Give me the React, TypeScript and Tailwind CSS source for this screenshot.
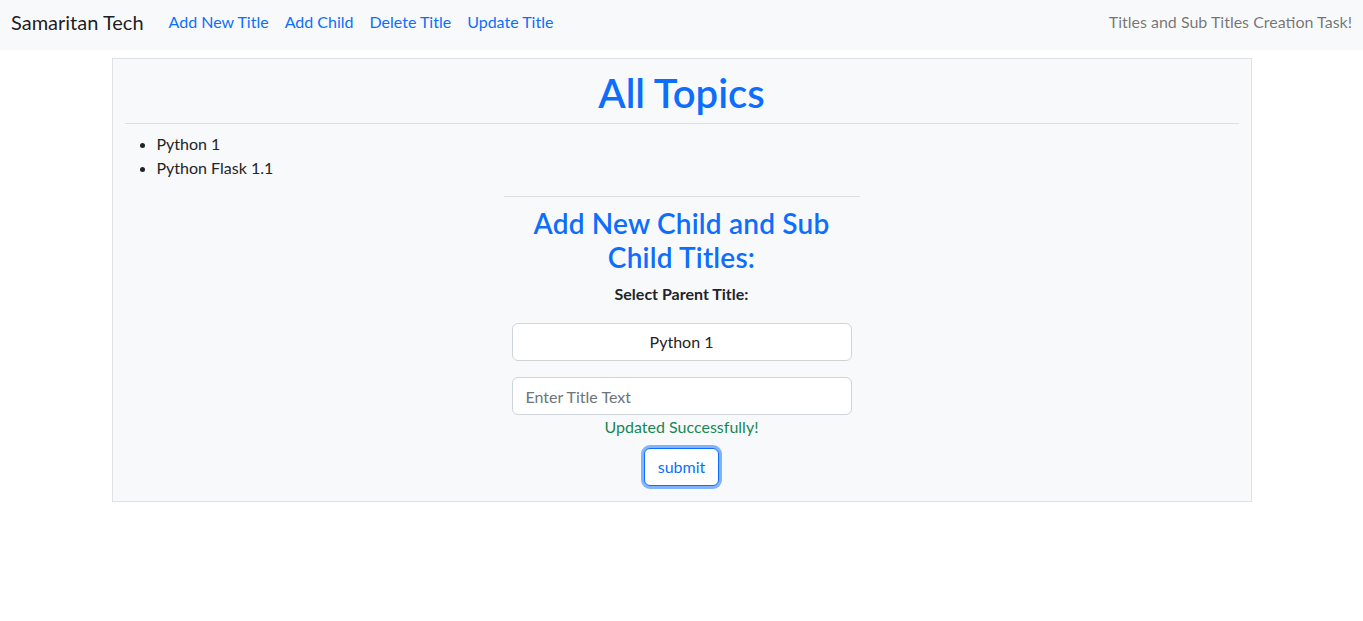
export default function App() {
  const links = ["Add New Title", "Add Child", "Delete Title", "Update Title"];

  return (
    <div className="min-h-screen bg-white font-['Lato','Open_Sans',sans-serif] text-[16px] text-[#212529]">
      {/* navbar */}
      <nav className="flex h-[50px] items-center justify-between bg-[#f8f9fa] px-[11px] pb-[6px]">
        <div className="flex items-center">
          <span className="mr-[17px] text-[20px] text-[rgba(0,0,0,0.9)]">Samaritan Tech</span>
          <ul className="flex">
            {links.map((l) => (
              <li key={l}>
                <a href="#" className="block px-[8px] text-[#0d6efd]">
                  {l}
                </a>
              </li>
            ))}
          </ul>
        </div>
        <span className="text-[rgba(0,0,0,0.55)]">Titles and Sub Titles Creation Task!</span>
      </nav>

      {/* main box */}
      <div className="mx-auto mt-[8px] w-[1140px] border border-[#dee2e6] bg-[#f8f9fa] px-[12px] pb-[15px] pt-[10px]">
        <h1 className="text-center text-[40px] leading-[48px] font-semibold text-[#0d6efd]">All Topics</h1>
        <hr className="mt-[6px] border-t border-[#dcdfe3]" />
        <ul className="mt-[8px] list-disc pl-[32px] leading-[24px]">
          <li>Python 1</li>
          <li>Python Flask 1.1</li>
        </ul>

        <div className="mx-auto mt-[16px] w-[356px]">
          <hr className="border-t border-[#dcdfe3]" />
          <h3 className="mt-[9px] text-center text-[28px] leading-[34px] tracking-[0.2px] font-semibold text-[#0d6efd]">
            Add New Child and Sub Child Titles:
          </h3>
          <div className="mt-[8px] flex flex-col items-center px-[8px]">
            <label className="font-bold leading-[24px]">Select Parent Title:</label>
            <div className="mt-[17px] flex h-[38px] w-full items-center justify-center rounded-[6px] border border-[#ced4da] bg-white">
              Python 1
            </div>
            <input
              placeholder="Enter Title Text"
              className="mt-[16px] h-[38px] w-full rounded-[6px] border border-[#ced4da] bg-white px-[13px] outline-none placeholder:text-[#6c757d]"
            />
            <p className="leading-[24px] text-[#198754]">Updated Successfully!</p>
            <button className="mt-[9px] h-[38px] rounded-[6px] border border-[#0d6efd] bg-white px-[13px] text-[#0d6efd] shadow-[0_0_0_3px_rgba(13,110,253,0.5)]">
              submit
            </button>
          </div>
        </div>
      </div>
    </div>
  );
}
